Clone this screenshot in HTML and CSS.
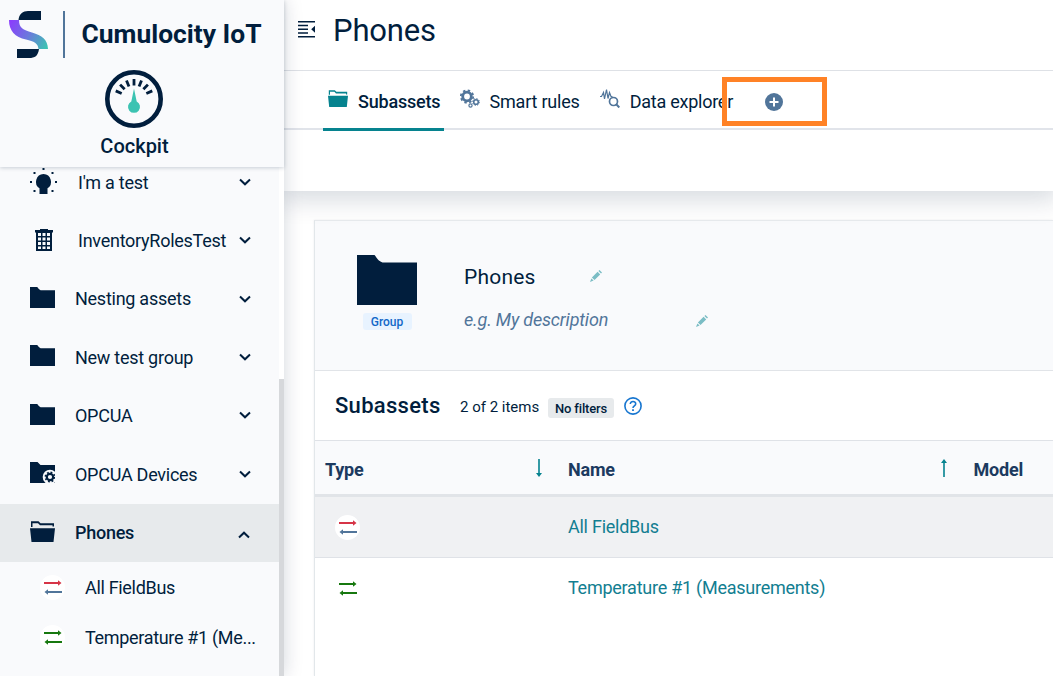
FILE: index.html
```html
<!DOCTYPE html>
<html lang="en">
<head>
<meta charset="utf-8">
<title>Phones - Cockpit</title>
<link rel="stylesheet" href="styles.css">
</head>
<body>
<svg class="defs" aria-hidden="true">
  <defs>
    <linearGradient id="brand" gradientUnits="userSpaceOnUse" x1="0" y1="14" x2="38" y2="36"><stop offset="0" stop-color="#8a3ffc"/><stop offset=".5" stop-color="#6b79dc"/><stop offset="1" stop-color="#3cc3b2"/></linearGradient>
    <symbol id="folder" viewBox="0 0 60 50" preserveAspectRatio="none"><path d="M0 0H17.500C20 3 21 6 25.500 7.500H60V50H0Z"/></symbol>
    <symbol id="folder-open" viewBox="0 0 25 21" preserveAspectRatio="none"><path d="M1 6V.2h7.500l2 2H24V5.500h-1.500V4.200H10L8 2.200H2.500v3.800ZM0 7.200h25L23.500 21h-22Z"/></symbol>
    <symbol id="chevron" viewBox="0 0 12 8"><path d="M1 1.500 6 6.300l5-4.800" fill="none" stroke="currentColor" stroke-width="2"/></symbol>
    <symbol id="arrow" viewBox="0 0 18 6"><path d="M0 2h14V.2L17.500 3 14 5.800V4H0Z"/></symbol>
    <symbol id="pencil" viewBox="0 0 12 12"><path d="M1.900 7.500 7.600 1.800 10.200 4.400 4.500 10.100ZM8.400 1 9.500 0 12 2.500 11 3.600ZM1.400 8.400l2.200 2.200L0 12Z"/></symbol>
    <symbol id="sort" viewBox="0 0 8 18"><path d="M3.200 0h1.600v14H7L4 18 1 14H3.200Z"/></symbol>
  </defs>
</svg>
<div class="app">
  <aside class="sidebar">
    <header class="brand">
      <div class="brand-row">
        <svg class="logo" viewBox="0 0 39 48"><path fill="url(#brand)" d="M0 9H10C10 17 14 19 23 21.500 33 24.500 38.500 28 39 38H29.500C29 32 25 30.500 17 28.500 6 26 0 20 0 9Z"/><path fill="#011e3d" d="M9.500 9C10 3 14 0 19 0H32V9ZM8 38H30C29 45 26 47 20 47H8Z"/></svg>
        <span class="rule"></span>
        <span class="brand-name">Cumulocity IoT</span>
      </div>
      <svg class="gauge" viewBox="0 0 58 58"><circle cx="29" cy="29" r="26.700" fill="none" stroke="#011e3d" stroke-width="4.600"/><g stroke="#011e3d" stroke-width="2.800"><path d="M29 9v6.500"/><path d="M29 9v6.500" transform="rotate(22 29 29)"/><path d="M29 9v6.500" transform="rotate(44 29 29)"/><path d="M29 9v6.500" transform="rotate(66 29 29)"/><path d="M29 9v6.500" transform="rotate(-22 29 29)"/><path d="M29 9v6.500" transform="rotate(-44 29 29)"/><path d="M29 9v6.500" transform="rotate(-66 29 29)"/></g><path fill="#3cc3b2" d="M29 18.500 31.700 31.500A6 6 0 1 1 26.300 31.500Z"/></svg>
      <div class="app-name">Cockpit</div>
    </header>
    <nav class="nav">
      <ul class="nav-list">
        <li class="nav-item"><svg class="ico-bulb" viewBox="0 0 27 26"><path d="M13.500 6a7.800 7.800 0 0 1 4 14.300V26h-8v-5.700A7.800 7.800 0 0 1 13.500 6Z"/><path d="M12.500 0h2v2h-2zM0 13h2v2H0zM25 13h2v2h-2zM3.500 4h2v2h-2zM21.500 4h2v2h-2zM3.500 22h2v2h-2zM21.500 22h2v2h-2z"/></svg><span class="label">I'm a test</span><svg class="chev"><use href="#chevron"/></svg></li>
        <li class="nav-item"><svg class="ico-grid" viewBox="0 0 18 22"><path fill-rule="evenodd" d="M5 0h8v1h5v2.500h-1V22H1V3.500H0V1h5ZM3 4v3h3V4ZM7.500 4v3h3V4ZM12 4v3h3V4ZM3 8.500v3h3v-3ZM7.500 8.500v3h3v-3ZM12 8.500v3h3v-3ZM3 13v3h3v-3ZM7.500 13v3h3v-3ZM12 13v3h3v-3ZM3 17.500v2.500h3v-2.500ZM7.500 17.500v2.500h3v-2.500ZM12 17.500v2.500h3v-2.500Z"/></svg><span class="label">InventoryRolesTest</span><svg class="chev"><use href="#chevron"/></svg></li>
        <li class="nav-item"><svg class="ico-folder"><use href="#folder"/></svg><span class="label">Nesting assets</span><svg class="chev"><use href="#chevron"/></svg></li>
        <li class="nav-item"><svg class="ico-folder"><use href="#folder"/></svg><span class="label">New test group</span><svg class="chev"><use href="#chevron"/></svg></li>
        <li class="nav-item"><svg class="ico-folder"><use href="#folder"/></svg><span class="label">OPCUA</span><svg class="chev"><use href="#chevron"/></svg></li>
        <li class="nav-item"><svg class="ico-folder" viewBox="0 0 25 21"><path d="M0 0h7.500l3 3H25v18H0Z"/><circle cx="20" cy="15" r="7.300" fill="#f9fafc"/><circle cx="20" cy="15" r="3.200" fill="none" stroke="#011e3d" stroke-width="2.200"/><circle cx="20" cy="15" r="4.700" fill="none" stroke="#011e3d" stroke-width="1.500" stroke-dasharray="1.850 1.840"/></svg><span class="label">OPCUA Devices</span><svg class="chev"><use href="#chevron"/></svg></li>
        <li class="nav-item active"><svg class="ico-folder"><use href="#folder-open"/></svg><span class="label">Phones</span><svg class="chev up"><use href="#chevron"/></svg></li>
        <li class="nav-item child"><span class="disc"><svg class="arr red"><use href="#arrow"/></svg><svg class="arr back slate"><use href="#arrow"/></svg></span><span class="label">All FieldBus</span></li>
        <li class="nav-item child"><span class="disc"><svg class="arr green"><use href="#arrow"/></svg><svg class="arr back green"><use href="#arrow"/></svg></span><span class="label">Temperature #1 (Me...</span></li>
      </ul>
      <div class="scroll"><div class="thumb"></div></div>
    </nav>
  </aside>
  <main class="main">
    <header class="topbar">
      <svg class="toggle" viewBox="0 0 17 17"><path d="M0 0h17v1.600H0zM0 3.700h10v1.600H0zM0 7.500h10v1.600H0zM0 11.200h10v1.600H0zM0 15h17v1.600H0zM17 4.800v7l-3.800-3.500Z"/></svg>
      <h1>Phones</h1>
    </header>
    <div class="tabs">
      <div class="tab current"><svg class="t-folder"><use href="#folder-open"/></svg><span>Subassets</span></div>
      <div class="tab rules"><svg class="t-gears" viewBox="0 0 20 19"><g fill="none" stroke="#51759a"><circle cx="7" cy="7.500" r="4.300" stroke-width="2.800"/><circle cx="7" cy="7.500" r="6.200" stroke-width="1.800" stroke-dasharray="2.440 2.430"/><circle cx="16" cy="13" r="2.300" stroke-width="1.600"/><circle cx="16" cy="13" r="3.400" stroke-width="1" stroke-dasharray="1.340 1.330"/><circle cx="10.500" cy="16.500" r="1.600" stroke-width="1.200"/></g></svg><span>Smart rules</span></div>
      <div class="tab explorer"><svg class="t-explore" viewBox="0 0 20 19"><path d="M0 7.500H1.500L3.500 3.500 4.500 10 6.500.5 8 9.500 9.500 3.500 11 7.500H12.500" fill="none" stroke="#51759a" stroke-width="1.200"/><circle cx="13.500" cy="12.500" r="4" fill="none" stroke="#51759a" stroke-width="1.700"/><path d="m16 15 3.300 3.500" stroke="#51759a" stroke-width="2"/></svg><span>Data explorer</span></div>
      <svg class="plus" viewBox="0 0 18 18"><circle cx="9" cy="9" r="9" fill="#51759a"/><path d="M9 4.500v9M4.500 9h9" stroke="#fff" stroke-width="2"/></svg>
      <div class="highlight"></div>
    </div>
    <div class="actionbar"></div>
    <section class="content">
      <div class="card">
        <div class="summary">
          <div class="asset"><svg class="big-folder"><use href="#folder"/></svg><span class="group">Group</span></div>
          <div class="fields">
            <div class="field"><span class="name">Phones</span><svg class="pencil"><use href="#pencil"/></svg></div>
            <div class="field"><span class="desc">e.g. My description</span><svg class="pencil low"><use href="#pencil"/></svg></div>
          </div>
        </div>
        <div class="listhead">
          <h2>Subassets</h2><span class="count">2 of 2 items</span><span class="filters">No filters</span>
          <svg class="help" viewBox="0 0 18 18"><circle cx="9" cy="9" r="8.100" fill="none" stroke="#1776d0" stroke-width="1.600"/><path d="M6.300 7.100C6.300 3.500 11.800 3.700 11.700 7 11.600 8.800 9 9 9 11" fill="none" stroke="#1776d0" stroke-width="1.600"/><path fill="#1776d0" d="M8.100 12.300h1.800v1.800H8.100z"/></svg>
        </div>
        <div class="row thead"><div class="cell type">Type<svg class="sort"><use href="#sort"/></svg></div><div class="cell">Name<svg class="sort asc"><use href="#sort"/></svg></div><div class="cell">Model</div></div>
        <div class="row stripe"><div class="cell icon"><span class="disc"><svg class="arr red"><use href="#arrow"/></svg><svg class="arr back slate"><use href="#arrow"/></svg></span></div><div class="cell link">All FieldBus</div></div>
        <div class="row last"><div class="cell icon"><span class="disc"><svg class="arr green"><use href="#arrow"/></svg><svg class="arr back green"><use href="#arrow"/></svg></span></div><div class="cell link">Temperature #1 (Measurements)</div></div>
      </div>
    </section>
  </main>
</div>
</body>
</html>
```
FILE: styles.css
```css
* { box-sizing: border-box; }
body { margin: 0; font-family: Roboto, "Liberation Sans", sans-serif; color: #011e3d; font-size: 18px; font-weight: 400; overflow: hidden; }
svg { display: block; flex: none; fill: currentColor; }
h1, h2 { margin: 0; font-weight: 400; }
.defs { position: absolute; width: 0; height: 0; }
.app { display: flex; width: 1053px; height: 676px; }

.sidebar { width: 284px; flex: none; display: flex; flex-direction: column; background: #f9fafc; box-shadow: 0 0 18px rgba(1, 30, 61, .18); z-index: 2; }
.brand { height: 167px; flex: none; box-shadow: 0 1px 4px rgba(1, 30, 61, .2); display: flex; flex-direction: column; align-items: center; z-index: 1; }
.brand-row { align-self: stretch; display: flex; align-items: center; padding: 11px 0 0 9px; height: 58px; }
.logo { width: 39px; height: 48px; }
.rule { width: 1.5px; height: 47px; background: #51759a; margin-left: 15px; }
.brand-name { margin-left: 17px; padding-bottom: 1px; font-size: 26.4px; font-weight: 700; line-height: 46px; white-space: nowrap; }
.gauge { width: 58px; height: 58px; margin: 12px 16px 0 0; }
.app-name { margin: 6px 15px 0 0; font-size: 20px; font-weight: 500; line-height: 24px; }
.nav { flex: 1; min-height: 0; display: flex; overflow: hidden; }
.nav-list { list-style: none; margin: -13.4px 0 0; padding: 0; width: 279px; }
.nav-item { display: flex; align-items: center; height: 58.4px; padding: 0 28.5px 0 30px; }
.nav-item .label { flex: 1; margin-left: 20px; padding-bottom: 1.5px; white-space: nowrap; letter-spacing: -.26px; }
.ico-folder { width: 25px; height: 21px; margin-bottom: 4px; }
.ico-bulb { width: 27px; height: 26px; margin-bottom: 4px; }
.nav-item .ico-bulb + .label { margin-left: 21px; }
.ico-grid { width: 18px; height: 22px; margin: 0 0 3px 4.5px; }
.nav-item .ico-grid + .label { margin-left: 25.5px; }
.chev { width: 12px; height: 8px; margin-bottom: 2px; }
.chev.up { transform: rotate(180deg); margin: 3px 1px 0 0; }
.active { background: #e7eaec; font-weight: 500; }
.nav-item.child { height: 50px; padding: 0 0 0 40px; }
.nav-item.child .label { padding-bottom: 0; letter-spacing: -.32px; }
.disc { width: 25px; height: 25px; border-radius: 50%; background: #fff; display: flex; flex-direction: column; align-items: flex-start; padding-left: 3.5px; justify-content: center; gap: 3px; }
.arr { width: 18px; height: 6px; }
.back { transform: rotate(180deg); }
.red { color: #d63447; }
.slate { color: #51759a; }
.green { color: #17780f; }
.scroll { width: 5px; padding-top: 212px; background: #fff; }
.thumb { height: 100%; background: #d6d8db; }

.main { flex: 1; min-width: 0; display: flex; flex-direction: column; background: #fff; }
.topbar { height: 71px; flex: none; border-bottom: 1px solid #dee1e6; display: flex; align-items: flex-start; padding: 10px 0 0 14px; }
.toggle { width: 17px; height: 17px; margin-top: 10.5px; }
h1 { margin-left: 18px; font-size: 31px; line-height: 41px; letter-spacing: -.15px; }
.tabs { position: relative; height: 60px; flex: none; display: flex; align-items: flex-start; padding-left: 39px; background: linear-gradient(#e1e4ea, #e1e4ea) 0 57px / 100% 2px no-repeat; }
.tab { height: 60px; display: flex; align-items: center; white-space: nowrap; letter-spacing: -.2px; }
.current { width: 121px; padding-left: 5px; font-weight: 500; border-bottom: 3px solid #06838f; }
.t-folder { color: #06838f; width: 20px; height: 17px; margin-bottom: 2px; }
.current span { margin-left: 10px; padding-top: 3px; }
.rules { padding-left: 15.5px; }
.t-gears, .t-explore { width: 20px; height: 19px; margin-bottom: 6px; }
.rules span { margin-left: 10px; }
.explorer { padding-left: 20px; letter-spacing: -.25px; }
.explorer span { margin-left: 10px; }
.plus { width: 18px; height: 18px; margin: 22px 0 0 32px; }
.highlight { position: absolute; left: 438px; top: 6px; width: 105px; height: 49px; border: 5px solid #ff8226; }
.actionbar { height: 60px; flex: none; background: #fff; box-shadow: 0 3px 26px 6px rgba(1, 30, 61, .16); clip-path: inset(0 0 -40px 0); }
.content { flex: 1; min-height: 0; padding: 29px 0 0 30px; }
.card { width: 739px; height: 456px; border-left: 1px solid #e2e7ea; border-top: 1px solid #e8ebee; background: #fff; box-shadow: 0 0 2px rgba(1, 30, 61, .08); }
.summary { height: 150px; background: #f9fafc; border-bottom: 1px solid #e1e4e8; display: flex; padding: 34px 0 0 42px; }
.asset { width: 60px; display: flex; flex-direction: column; align-items: center; }
.big-folder { width: 60px; height: 50px; }
.group { margin: 8px 0 0; width: 49px; height: 17px; border-radius: 3px; background: #e8f3ff; color: #1268c8; font-size: 12px; line-height: 18px; font-weight: 500; text-align: center; }
.fields { margin-left: 47px; }
.field { display: flex; align-items: center; height: 43px; }
.name { width: 126px; font-size: 21px; letter-spacing: .2px; }
.desc { width: 232px; font-style: italic; color: #51759a; letter-spacing: -.17px; }
.pencil { width: 12px; height: 12px; margin-bottom: 1px; color: #7bbdc5; }
.low { margin: 2px 0 0; }
.listhead { height: 70px; display: flex; align-items: center; padding-left: 20px; border-bottom: 1px solid #dfe2e7; }
h2 { width: 106px; font-size: 22px; font-weight: 500; letter-spacing: .3px; }
.count { width: 79px; margin: 3px 0 0 19px; font-size: 15px; white-space: nowrap; }
.filters { margin: 4px 0 0 9px; width: 66px; height: 20px; line-height: 21px; text-align: center; border-radius: 3px; background: #e7eaec; font-size: 13px; font-weight: 500; letter-spacing: -.15px; }
.help { width: 18px; height: 18px; margin-left: 10px; }
.row { display: grid; grid-template-columns: 253px 405.500px 80px; height: 61px; align-items: center; border-bottom: 1px solid #dfe2e7; }
.cell { display: flex; align-items: center; white-space: nowrap; }
.thead { height: 56px; background: #f9fafc; border-bottom: 3px solid #e1e4e8; color: #1c3a60; font-weight: 700; letter-spacing: -.2px; }
.type { padding-left: 10px; }
.thead .cell { padding-top: 4px; }
.sort { width: 8px; height: 18px; margin: 0 25.5px 4px auto; color: #06838f; }
.asc { transform: rotate(180deg); }
.stripe { background: #f0f1f3; }
.last { border-bottom: 0; }
.icon { padding-left: 20px; }
.link { color: #127e91; padding-bottom: 2px; letter-spacing: -.25px; }
```
